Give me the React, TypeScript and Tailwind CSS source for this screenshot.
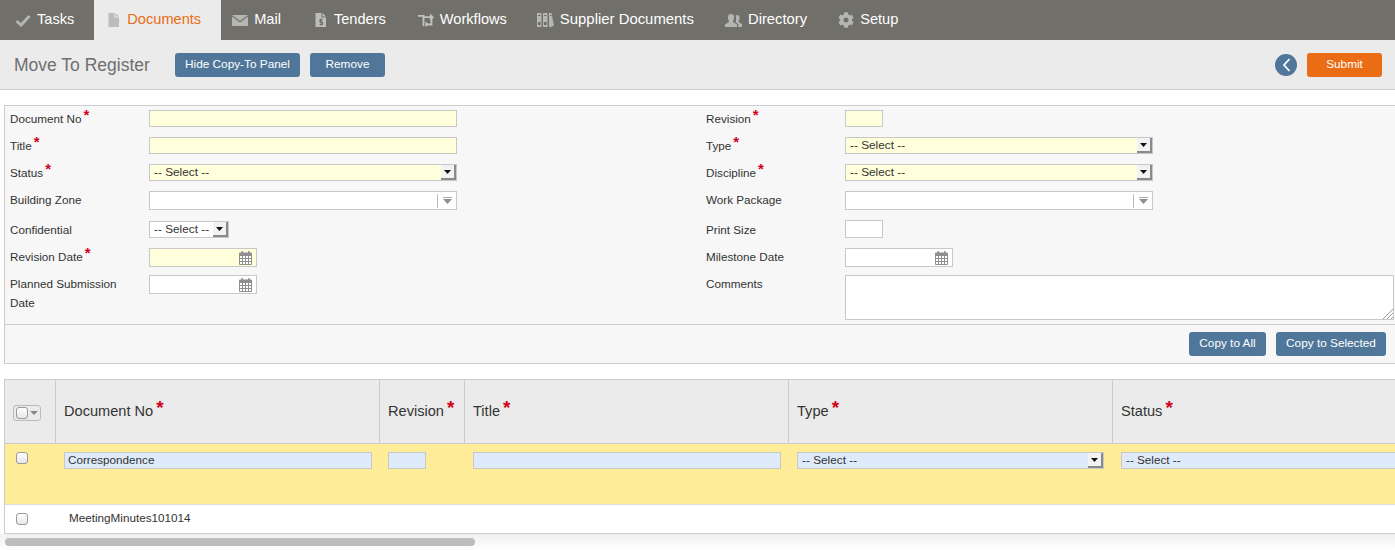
import React from "react";
import { FaCog } from "react-icons/fa";

const Star = () => <span className="text-[#d0021b] font-bold text-[15px] leading-none relative -top-[3px] ml-[2px]">*</span>;

const CheckIcon = () => (
  <svg width="16" height="13" viewBox="0 0 16 13"><path d="M1.5 7 L6 11 L14.5 2" fill="none" stroke="#b5b5b2" strokeWidth="3" /></svg>
);
const FileIcon = ({ dollar }: { dollar?: boolean }) => (
  <svg width="12" height="14" viewBox="0 0 12 14">
    <path d="M0.5 0 H6.5 V4.5 H11 V14 H0.5 Z M7.5 0 L11 3.5 H7.5 Z" fill="#bdbdbb" />
    {dollar && <path d="M7.5 6.5 H5 V9 H7.5 V11.5 H4.5 M6 5.5 V12.5" fill="none" stroke="#706f6a" strokeWidth="1.1" />}
  </svg>
);
const MailIcon = () => (
  <svg width="16" height="11" viewBox="0 0 16 11">
    <path d="M0 0 H16 L8 6 Z M0 1.6 L8 7.6 L16 1.6 V11 H0 Z" fill="#b5b5b2" />
  </svg>
);
const FlowIcon = () => (
  <svg width="16" height="14" viewBox="0 0 16 14">
    <path d="M0 2.8 H5.5 V13 M5.5 4.2 H13 M8 11.5 H13.5 V3" fill="none" stroke="#c2c2bf" strokeWidth="1.8" />
    <path d="M12 0.5 L16 4.2 L12 7.5 Z M7.5 8.5 L11 11.5 L7.5 14 Z" fill="#c2c2bf" />
  </svg>
);
const BinderIcon = () => (
  <svg width="17" height="14" viewBox="0 0 17 14">
    <g fill="#b5b5b2">
      <path d="M0 0 H4.5 V14 H0 Z M6 0 H10.5 V14 H6 Z M12 0 H14.5 L17 12.5 L14 14 H12 Z" />
    </g>
    <g fill="#706f6a">
      <rect x="1" y="2" width="2.5" height="1" />
      <rect x="1" y="9" width="2.5" height="3" />
      <rect x="7" y="2" width="2.5" height="1" />
      <rect x="7" y="9" width="2.5" height="3" />
      <rect x="13" y="2" width="1.5" height="1" />
    </g>
  </svg>
);
const UsersIcon = () => (
  <svg width="17" height="13" viewBox="0 0 17 13">
    <path d="M6 0 C8.5 0 9.5 2 9 4.5 C8.7 6 8 7 8 8 L12 10.5 V13 H0 V10.5 L4 8 C4 7 3.3 6 3 4.5 C2.5 2 3.5 0 6 0 Z" fill="#b5b5b2" />
    <path d="M12 1 C14 1 15 2.5 14.5 4.8 C14.2 6 13.6 7 13.6 8 L17 10 V13 H13.2 V10 L10.6 8.2 C11 7 11.6 4 10.6 1.8 C11 1.3 11.4 1 12 1 Z" fill="#b5b5b2" />
  </svg>
);
const CalendarIcon = () => (
  <svg width="13" height="14" viewBox="0 0 13 14" className="shrink-0">
    <path d="M0.5 2 H12.5 V13.5 H0.5 Z" fill="#fff" stroke="#8f8f8f" />
    <rect x="0.5" y="2" width="12" height="3" fill="#8f8f8f" />
    <rect x="2.5" y="0" width="1.5" height="3" fill="#8f8f8f" />
    <rect x="9" y="0" width="1.5" height="3" fill="#8f8f8f" />
    <path d="M0.5 7.5 H12.5 M0.5 10.5 H12.5 M3.5 5 V13.5 M6.5 5 V13.5 M9.5 5 V13.5" stroke="#8f8f8f" fill="none" />
  </svg>
);

const navItems = [
  { label: "Tasks", icon: <CheckIcon />, cls: "pl-[15px] pr-[20px] gap-[6px] text-[14.6px]" },
  { label: "Documents", icon: <FileIcon />, active: true, cls: "pl-[14px] pr-[20px] gap-[7px] text-[14.6px]" },
  { label: "Mail", icon: <MailIcon />, cls: "pl-[11px] pr-[17px] gap-[6px] text-[14.6px]" },
  { label: "Tenders", icon: <FileIcon dollar />, cls: "pl-[17px] pr-[16px] gap-[7px] text-[14.6px]" },
  { label: "Workflows", icon: <FlowIcon />, cls: "pl-[16px] pr-[15px] gap-[6px] text-[14.6px]" },
  { label: "Supplier Documents", icon: <BinderIcon />, cls: "pl-[15px] pr-[15px] gap-[6px] text-[14.9px]" },
  { label: "Directory", icon: <UsersIcon />, cls: "pl-[16px] pr-[15px] gap-[6px] text-[14.8px]" },
  { label: "Setup", icon: <FaCog className="text-[#b5b5b2] text-[16px]" />, cls: "pl-[16px] pr-[15px] gap-[6px] text-[14.6px]" },
];

const BlueButton = ({ children, cls }: { children: React.ReactNode; cls: string }) => (
  <button className={`h-[24px] pb-[1px] rounded-[3px] bg-[#50779a] text-white text-[11.8px] leading-none ${cls}`}>{children}</button>
);

const SelectArrow = () => (
  <span className="w-[15px] h-full flex items-center justify-center border-r-2 border-b-2 border-[#8a8a8a] bg-[#f2f2f2]">
    <svg width="7" height="4" viewBox="0 0 7 4"><path d="M0 0 H7 L3.5 4 Z" fill="#111" /></svg>
  </span>
);

const Select = ({ cls, bg }: { cls: string; bg: string }) => (
  <div className={`flex items-center justify-between border border-[#c8c8c8] h-[17px] pl-[4px] text-[11.8px] leading-none text-[#333] ${bg} ${cls}`}>
    <span>-- Select --</span>
    <SelectArrow />
  </div>
);

const Combo = () => (
  <div className="flex items-center justify-end w-[308px] h-[19px] border border-[#c8c8c8] bg-white">
    <span className="w-px h-[14px] bg-[#bbb]" />
    <span className="w-[18px] flex flex-col items-center gap-[1px]">
      <span className="w-[9px] h-px bg-[#aaa]" />
      <svg width="9" height="5" viewBox="0 0 9 5"><path d="M0 0 H9 L4.5 5 Z" fill="#8f8f8f" /></svg>
    </span>
  </div>
);

const TextBox = ({ cls }: { cls: string }) => <div className={`border border-[#c8c8c8] ${cls}`} />;

const DateBox = ({ bg }: { bg: string }) => (
  <div className={`flex items-center justify-end w-[108px] h-[19px] border border-[#c8c8c8] pr-[4px] ${bg}`}>
    <CalendarIcon />
  </div>
);

const Field = ({ label, req, flat, children, h }: { label: React.ReactNode; req?: boolean; flat?: boolean; children: React.ReactNode; h: string }) => (
  <div className={`flex items-start ${h}`}>
    <div className={`w-[139px] text-[11.7px] leading-[19px] text-[#333] pr-[20px] ${flat ? "" : "-mt-px"}`}>
      {label}
      {req && <Star />}
    </div>
    {children}
  </div>
);

const Head = ({ label, cls }: { label?: string; cls: string }) => (
  <div className={`border-r border-[#ccc] pl-[8px] pt-[20px] text-[14.6px] text-[#333] leading-[22px] ${cls}`}>
    {label}
    <span className="text-[#d0021b] font-bold text-[19px] leading-none relative -top-[2px] ml-[3px]">*</span>
  </div>
);

const CheckBox = () => <span className="block w-[12px] h-[12px] rounded-[3px] border border-[#9a9a9a] bg-gradient-to-b from-white to-[#e6e6e6]" />;

export default function App() {
  return (
    <div className="w-[1395px] h-[550px] overflow-hidden bg-white font-['Liberation_Sans',Arial,sans-serif]">
      <nav className="flex h-[40px] bg-[#706f6a]">
        {navItems.map((item) => (
          <a key={item.label} className={`flex items-center leading-[20px] ${item.cls} ${item.active ? "bg-[#ebebeb] text-[#ea6c14]" : "text-white"}`}>
            {item.icon}
            <span className="-mt-[2px]">{item.label}</span>
          </a>
        ))}
      </nav>

      <header className="flex items-center h-[50px] bg-[#ebebeb] border-b border-[#ccc] pt-[1px] pl-[14px] pr-[13px]">
        <h1 className="text-[17.5px] text-[#6f6f6f] w-[161px]">Move To Register</h1>
        <BlueButton cls="w-[125px]">Hide Copy-To Panel</BlueButton>
        <BlueButton cls="w-[75px] ml-[10px]">Remove</BlueButton>
        <div className="ml-auto flex items-center gap-[10px]">
          <span className="w-[22px] h-[22px] rounded-full bg-[#50779a] flex items-center justify-center">
            <svg width="9" height="14" viewBox="0 0 9 14"><path d="M7.5 1 L2 7 L7.5 13" fill="none" stroke="#fff" strokeWidth="1.8" /></svg>
          </span>
          <button className="w-[75px] h-[24px] pb-[1px] rounded-[3px] bg-[#ea6c14] text-white text-[11.8px] leading-none">Submit</button>
        </div>
      </header>

      <section className="ml-[4px] mt-[15px] border-t border-l border-[#ccc] bg-[#f7f7f7]">
        <div className="flex h-[219px] pt-[4px] pl-[5px] border-b border-[#ccc]">
          <div className="w-[696px] shrink-0">
            <Field label="Document No" req h="h-[27px]"><TextBox cls="w-[308px] h-[17px] bg-[#ffffdc]" /></Field>
            <Field label="Title" req h="h-[27px]"><TextBox cls="w-[308px] h-[17px] bg-[#ffffdc]" /></Field>
            <Field label="Status" req h="h-[27px]"><Select cls="w-[308px]" bg="bg-[#ffffdc]" /></Field>
            <Field label="Building Zone" h="h-[29px]"><Combo /></Field>
            <Field label="Confidential" flat h="h-[28px]"><Select cls="w-[80px] mt-[1px]" bg="bg-white" /></Field>
            <Field label="Revision Date" req h="h-[27px]"><DateBox bg="bg-[#ffffdc]" /></Field>
            <Field label="Planned Submission Date" h="h-[40px]"><DateBox bg="bg-white" /></Field>
          </div>
          <div className="flex-1">
            <Field label="Revision" req h="h-[27px]"><TextBox cls="w-[38px] h-[17px] bg-[#ffffdc]" /></Field>
            <Field label="Type" req h="h-[27px]"><Select cls="w-[308px]" bg="bg-[#ffffdc]" /></Field>
            <Field label="Discipline" req h="h-[27px]"><Select cls="w-[308px]" bg="bg-[#ffffdc]" /></Field>
            <Field label="Work Package" h="h-[29px]"><Combo /></Field>
            <Field label="Print Size" flat h="h-[28px]"><TextBox cls="w-[38px] h-[18px] bg-white" /></Field>
            <Field label="Milestone Date" h="h-[27px]"><DateBox bg="bg-white" /></Field>
            <Field label="Comments" h="h-[45px]">
              <div className="relative w-[549px] h-[45px] border border-[#c8c8c8] bg-white">
                <svg width="10" height="10" viewBox="0 0 10 10" className="absolute right-0 bottom-0">
                  <path d="M0 10 L10 0 M4 10 L10 4 M8 10 L10 8" stroke="#999" fill="none" />
                </svg>
              </div>
            </Field>
          </div>
        </div>
        <div className="flex items-center justify-end gap-[10px] h-[39px] pr-[9px] border-b border-[#ccc]">
          <BlueButton cls="w-[77px]">Copy to All</BlueButton>
          <BlueButton cls="w-[110px]">Copy to Selected</BlueButton>
        </div>
      </section>

      <section className="ml-[4px] mt-[15px] border-t border-l border-[#ccc]">
        <div className="grid grid-cols-[51px_324px_85px_324px_324px_1fr] h-[64px] bg-[#ebebeb] border-b border-[#ccc]">
          <div className="border-r border-[#ccc] flex items-center pl-[8px] pt-[3px]">
            <span className="flex items-center gap-[2px] w-[28px] h-[16px] border border-[#bbb] rounded-[3px] pl-[2px]">
              <CheckBox />
              <svg width="8" height="4" viewBox="0 0 8 4"><path d="M0 0 H8 L4 4 Z" fill="#888" /></svg>
            </span>
          </div>
          <Head label="Document No" cls="" />
          <Head label="Revision" cls="" />
          <Head label="Title" cls="" />
          <Head label="Type" cls="" />
          <Head label="Status" cls="border-r-0" />
        </div>
        <div className="grid grid-cols-[51px_324px_85px_324px_324px_1fr] h-[60px] bg-[#ffec99] text-[11.7px] text-[#333]">
          <div className="pl-[11px] pt-[8px]"><CheckBox /></div>
          <div className="pl-[8px] pt-[8px]">
            <div className="w-[308px] h-[17px] border border-[#c8c8c8] bg-[#deeafa] pl-[3px] leading-[14px]">Correspondence</div>
          </div>
          <div className="pl-[8px] pt-[8px]"><TextBox cls="w-[38px] h-[17px] bg-[#deeafa]" /></div>
          <div className="pl-[8px] pt-[8px]"><TextBox cls="w-[308px] h-[17px] bg-[#deeafa]" /></div>
          <div className="pl-[8px] pt-[8px]"><Select cls="w-[307px]" bg="bg-[#deeafa]" /></div>
          <div className="pl-[8px] pt-[8px]">
            <div className="w-[400px] h-[17px] border border-[#c8c8c8] bg-[#deeafa] pl-[4px] leading-[14px]">-- Select --</div>
          </div>
        </div>
        <div className="flex items-center h-[30px] bg-white border-y border-[#ddd] border-b-[#ccc] text-[11.7px] text-[#333]">
          <div className="w-[51px] pl-[11px]"><CheckBox /></div>
          <span className="pl-[13px] -mt-[2px]">MeetingMinutes101014</span>
        </div>
      </section>

      <div className="h-[16px] pt-[4px] pl-[5px] bg-gradient-to-b from-[#f0f0f0] to-white">
        <div className="w-[470px] h-[8px] rounded-full bg-[#bdbdbd]" />
      </div>
    </div>
  );
}
